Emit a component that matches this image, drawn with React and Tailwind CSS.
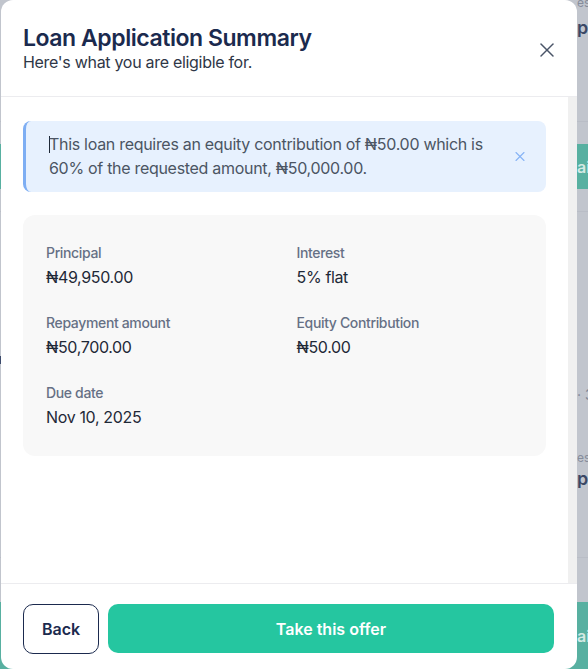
import { X } from 'lucide-react';

function BgRow({ className = '', children }) {
  return (
    <div className={`grid grid-cols-[577px_1fr] ${className}`}>
      <div />
      <div className="overflow-hidden whitespace-nowrap">{children}</div>
    </div>
  );
}

function Backdrop() {
  return (
    <div className="flex h-full flex-col">
      <BgRow className="-mt-[5px] h-[15px] text-[12px] leading-[15px] text-[#868c9b]">est</BgRow>
      <BgRow className="mt-[9px] h-[18px] text-[18px] font-semibold leading-[18px] text-[#3b4866]">pe</BgRow>
      <div className="h-[85px] border-b border-[#b9bdc6]" />
      <BgRow className="mt-[22px] h-[45px] items-center bg-[#58b0a1] text-[16px] font-semibold text-[#d3e9e4]">ai</BgRow>
      <div className="h-[23px] border-b border-[#b9bdc6]" />
      <div className="mt-[144px] h-[8px] w-[2px] bg-[#3b4a6b]" />
      <BgRow className="mt-[24px] h-[14px] text-[14px] leading-[14px] text-[#7d8494]">· 3</BgRow>
      <BgRow className="mt-[50px] h-[12px] text-[12px] leading-[12px] text-[#868c9b]">est</BgRow>
      <BgRow className="mt-[6px] h-[18px] text-[18px] font-semibold leading-[18px] text-[#3b4866]">pe</BgRow>
      <div className="h-[70px] border-b border-[#b9bdc6]" />
      <BgRow className="mt-[44px] flex-1 items-center bg-[#58b0a1] text-[16px] font-semibold text-[#d3e9e4]">ai</BgRow>
    </div>
  );
}

function Detail({ label, value }) {
  return (
    <div>
      <div className="text-[14px] font-medium leading-5 tracking-[-0.35px] text-[#667085]">{label}</div>
      <div className="mt-0.5 text-[16px] leading-6 tracking-[-0.35px] text-[#1f2937]">{value}</div>
    </div>
  );
}

export default function App() {
  return (
    <div className="relative h-[669px] w-[588px] overflow-hidden bg-[#c1c5cd] font-['Inter','Noto_Sans',sans-serif]">
      <Backdrop />

      <div className="absolute left-px top-0 flex h-[669px] w-[576px] flex-col overflow-hidden rounded-xl bg-white">
        {/* header */}
        <div className="flex items-center justify-between border-b border-[#ececef] pb-[22px] pl-[22px] pr-[18px] pt-[26px]">
          <div>
            <h2 className="text-[23px] font-semibold leading-6 tracking-[-0.45px] text-[#1b2a4e]">
              Loan Application Summary
            </h2>
            <p className="text-[16px] leading-6 tracking-[-0.3px] text-[#2f3747]">Here's what you are eligible for.</p>
          </div>
          <button className="flex h-6 w-6 items-center justify-center text-[#4a5568]">
            <X size={24} strokeWidth={1.5} />
          </button>
        </div>

        {/* body */}
        <div className="flex flex-1">
          <div className="flex-1 px-[22px] pt-6">
            <div className="flex items-center rounded-lg border-l-[3px] border-[#7eaef3] bg-[#e7f1fe] pb-[12px] pl-[23px] pr-[18px] pt-[11px]">
              <p className="w-[445px] text-[16px] leading-6 tracking-[-0.3px] text-[#4b5563]">
                <span className="-mr-px inline-block h-[17px] w-px bg-[#1f2937] align-[-3px]" />
                This loan requires an equity contribution of ₦50.00 which is 60% of the requested amount, ₦50,000.00.
              </p>
              <button className="ml-auto flex h-4 w-4 items-center justify-center text-[#86b2f5]">
                <X size={19} strokeWidth={1.6} />
              </button>
            </div>

            <div className="mt-[23px] grid grid-cols-2 gap-x-6 gap-y-6 rounded-xl bg-[#f8f8f8] px-[23px] pb-[27px] pt-[28px]">
              <Detail label="Principal" value="₦49,950.00" />
              <Detail label="Interest" value="5% flat" />
              <Detail label="Repayment amount" value="₦50,700.00" />
              <Detail label="Equity Contribution" value="₦50.00" />
              <Detail label="Due date" value="Nov 10, 2025" />
            </div>
          </div>
          <div className="w-[9px] bg-[#f0f0f0]" />
        </div>

        {/* footer */}
        <div className="flex gap-[9px] border-t border-[#ececef] pb-[15px] pl-[22px] pr-[23px] pt-5">
          <button className="h-[50px] w-[76px] rounded-[10px] border border-[#1b2a4e] text-[16px] font-semibold text-[#1b2a4e]">
            Back
          </button>
          <button className="h-[49px] flex-1 rounded-[10px] bg-[#25c6a0] text-[16px] font-semibold text-white">
            Take this offer
          </button>
        </div>
      </div>
    </div>
  );
}
